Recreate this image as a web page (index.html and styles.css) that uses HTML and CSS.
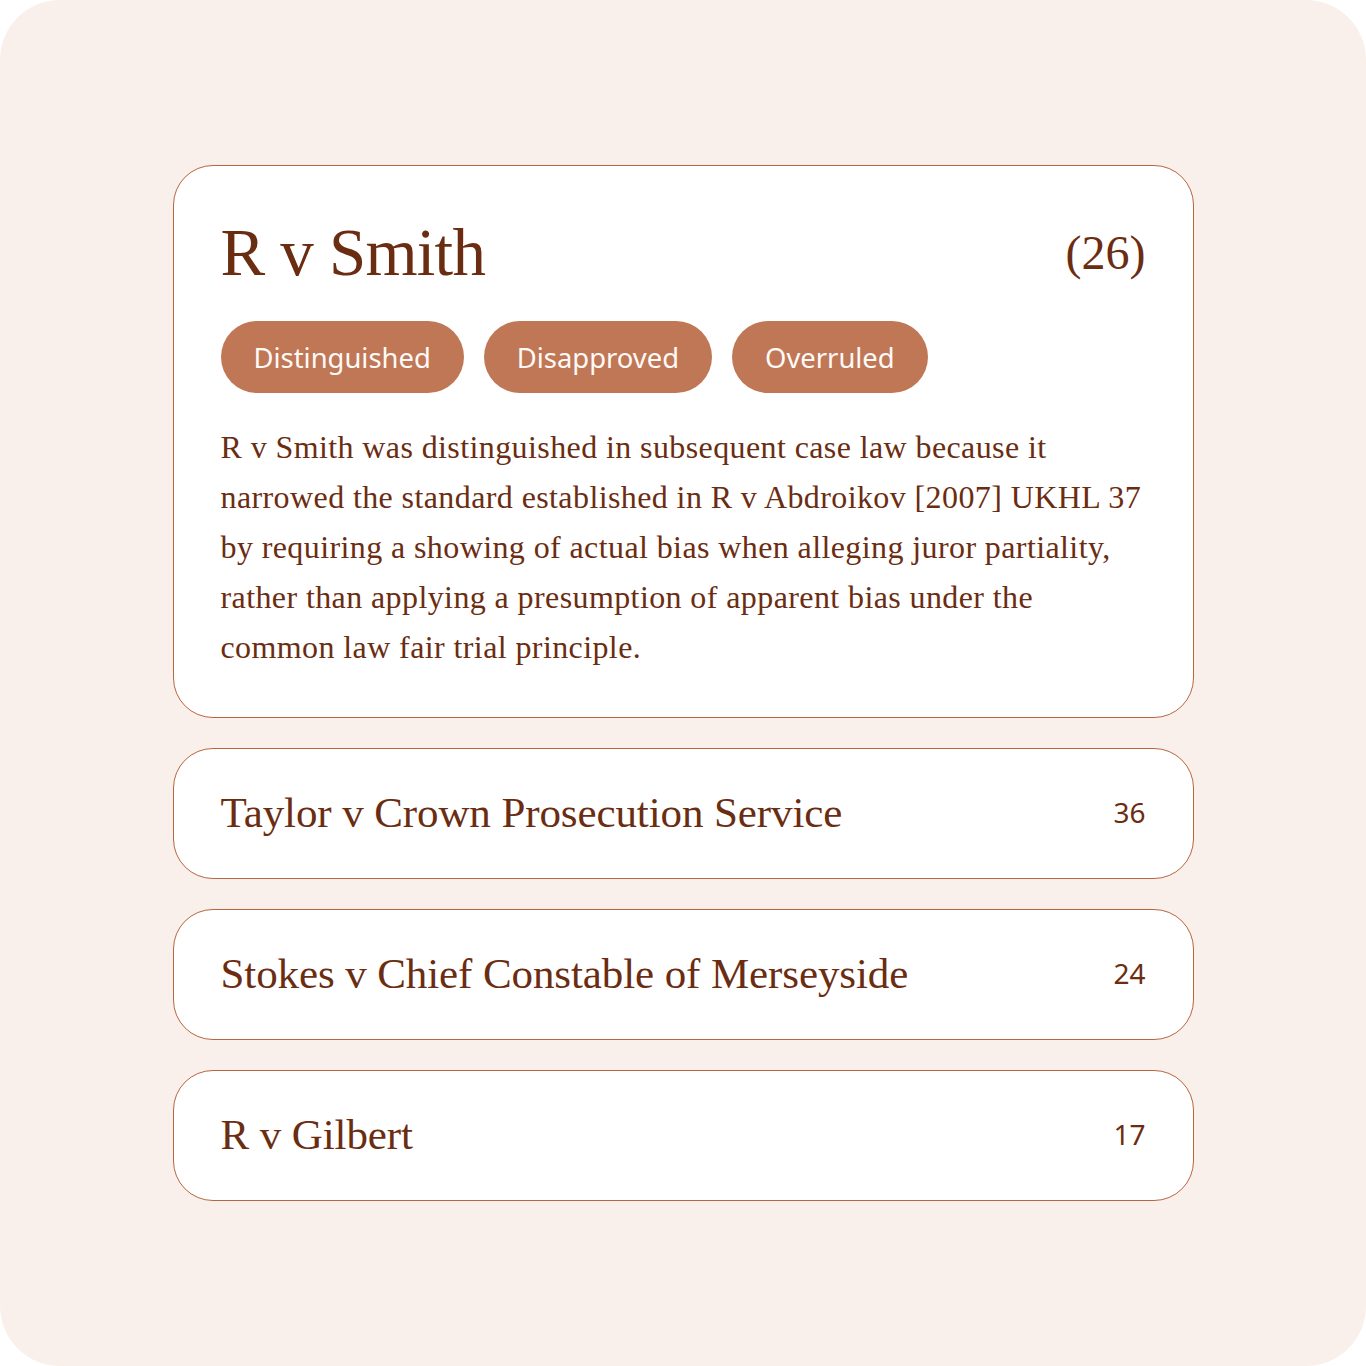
FILE: index.html
```html
<!DOCTYPE html>
<html lang="en">
<head>
<meta charset="utf-8">
<title>Case treatment</title>
<link rel="stylesheet" href="styles.css">
</head>
<body>
<main class="frame">
  <section class="stack">
    <article class="case-card">
      <header class="case-head">
        <h1 class="case-title">R v Smith</h1>
        <span class="case-count">(26)</span>
      </header>
      <ul class="tags">
        <li class="tag">Distinguished</li>
        <li class="tag">Disapproved</li>
        <li class="tag">Overruled</li>
      </ul>
      <p class="case-summary">R v Smith was distinguished in subsequent case law because it narrowed the standard established in R v Abdroikov [2007] UKHL 37 by requiring a showing of actual bias when alleging juror partiality, rather than applying a presumption of apparent bias under the common law fair trial principle.</p>
    </article>
    <div class="case-row">
      <span class="row-title">Taylor v Crown Prosecution Service</span>
      <span class="row-count">36</span>
    </div>
    <div class="case-row">
      <span class="row-title">Stokes v Chief Constable of Merseyside</span>
      <span class="row-count">24</span>
    </div>
    <div class="case-row">
      <span class="row-title">R v Gilbert</span>
      <span class="row-count">17</span>
    </div>
  </section>
</main>
</body>
</html>
```

FILE: styles.css
```css
* {
  box-sizing: border-box;
}

html,
body {
  margin: 0;
  padding: 0;
  background: #ffffff;
}

.frame {
  width: 1366px;
  height: 1366px;
  background: #faf0eb;
  border-radius: 60px;
  display: flex;
  align-items: center;
  justify-content: center;
}

.stack {
  width: 1021px;
  display: flex;
  flex-direction: column;
  gap: 30px;
}

.case-card,
.case-row {
  background: #ffffff;
  border: 1px solid #b9653f;
  border-radius: 40px;
  color: #6b2d12;
  font-family: "Liberation Serif", "Times New Roman", serif;
}

.case-card {
  padding: 48px 47px 45px;
}

.case-head {
  display: flex;
  align-items: center;
  justify-content: space-between;
}

.case-title {
  margin: 0;
  font-size: 67px;
  font-weight: 400;
  line-height: 77px;
  letter-spacing: -0.8px;
}

.case-count {
  font-size: 48px;
  line-height: 1;
}

.tags {
  list-style: none;
  margin: 30px 0 0;
  padding: 0;
  display: flex;
  gap: 20px;
}

.tag {
  height: 72px;
  padding: 0 33px;
  border-radius: 36px;
  background: #bf7756;
  color: #fffaf7;
  font-family: "Noto Sans", "Open Sans", sans-serif;
  font-size: 27.4px;
  display: flex;
  align-items: center;
}

.case-summary {
  margin: 29px -6px 0 0;
  font-size: 32px;
  line-height: 50px;
  letter-spacing: 0.4px;
}

.case-row {
  height: 131px;
  padding: 0 47px;
  display: flex;
  align-items: center;
  justify-content: space-between;
}

.row-title {
  font-size: 43px;
  letter-spacing: -0.1px;
  line-height: 1;
  padding-bottom: 3px;
}

.row-count {
  font-family: "Noto Sans", "Open Sans", sans-serif;
  font-size: 28px;
  line-height: 1;
  padding-bottom: 3px;
}
```
